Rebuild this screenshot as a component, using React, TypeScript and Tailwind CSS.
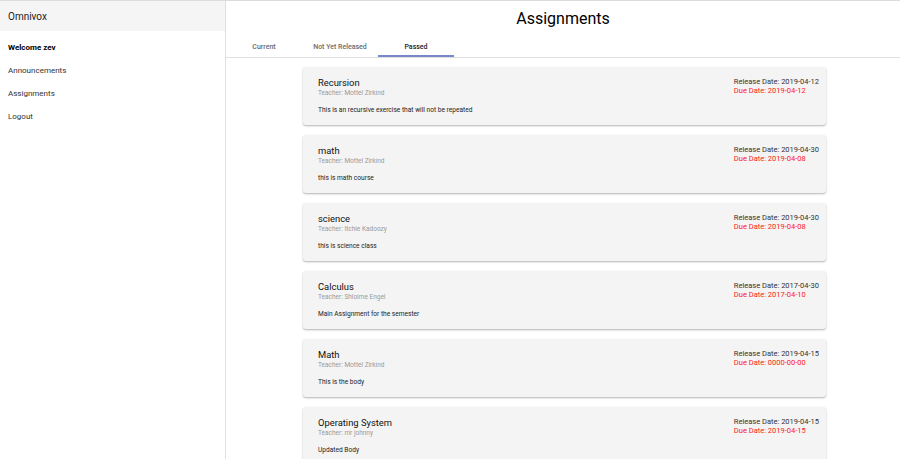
import React from 'react';

// Student assignments view - "Passed" tab

const assignments = [
  { title: 'Recursion', teacher: 'Mottel Zirkind', body: 'This is an recursive exercise that will not be repeated', release: '2019-04-12', due: '2019-04-12' },
  { title: 'math', teacher: 'Mottel Zirkind', body: 'this is math course', release: '2019-04-30', due: '2019-04-08' },
  { title: 'science', teacher: 'Itchie Kadoozy', body: 'this is science class', release: '2019-04-30', due: '2019-04-08' },
  { title: 'Calculus', teacher: 'Shloime Engel', body: 'Main Assignment for the semester', release: '2017-04-30', due: '2017-04-10' },
  { title: 'Math', teacher: 'Mottel Zirkind', body: 'This is the body', release: '2019-04-15', due: '0000-00-00' },
  { title: 'Operating System', teacher: 'mr johnny', body: 'Updated Body', release: '2019-04-15', due: '2019-04-15' },
];

const tabs = ['Current', 'Not Yet Released', 'Passed'];

export default function App() {
  const active = 'Passed';

  return (
    <div
      className="flex h-screen overflow-hidden border-t border-[#dcdcdc] bg-white text-[#212121]"
      style={{ fontFamily: 'Roboto, "Liberation Sans", sans-serif' }}
    >
      {/* Sidebar */}
      <aside className="w-[226px] shrink-0 border-r border-[#e0e0e0]">
        <div className="flex h-[30px] items-center bg-[#f5f5f5] px-[8px] text-[10px] text-[#212121]">
          Omnivox
        </div>
        <nav className="flex flex-col pt-[5px] text-[8px]">
          <div className="flex h-[23px] items-center px-[8px] font-bold text-black">Welcome zev</div>
          <div className="flex h-[23px] items-center px-[8px] text-[#333]">Announcements</div>
          <div className="flex h-[23px] items-center px-[8px] text-[#333]">Assignments</div>
          <div className="flex h-[23px] items-center px-[8px] text-[#333]">Logout</div>
        </nav>
      </aside>

      {/* Main */}
      <main className="flex min-h-0 flex-1 flex-col">
        <h1 className="flex h-[35px] shrink-0 items-center justify-center text-[16px] font-normal text-black">
          Assignments
        </h1>

        <div className="flex h-[22px] shrink-0 border-b border-[#e0e0e0]">
          {tabs.map((tab) => (
            <div
              key={tab}
              className={
                tab === active
                  ? 'flex w-[76px] items-center justify-center border-b-2 border-[#7986cb] pt-[3px] text-[7px] font-medium text-[#222]'
                  : 'flex w-[76px] items-center justify-center border-b-2 border-transparent pt-[3px] text-[7px] font-medium text-[#6b6b6b]'
              }
            >
              {tab}
            </div>
          ))}
        </div>

        <div className="flex flex-col items-center gap-[10px] pl-[3px] pt-[9px]">
          {assignments.map((a, i) => (
            <div
              key={i}
              className="flex h-[58px] w-[523px] shrink-0 justify-between rounded-[3px] bg-[#f4f4f4] pl-[15px] pr-[7px] pt-[9px] shadow-[0_1px_2px_rgba(0,0,0,0.3)]"
            >
              <div className="flex flex-col">
                <div className="text-[9.4px] font-normal leading-[13px] text-[#111]">{a.title}</div>
                <div className="text-[6.5px] leading-[9px] text-[#9a9a9a]">Teacher: {a.teacher}</div>
                <div className="mt-[7px] text-[6.6px] leading-[10px] text-[#222]">{a.body}</div>
              </div>
              <div className="flex flex-col pt-[1px] text-[7.5px] leading-[9px]">
                <div className="text-[#333]">Release Date: {a.release}</div>
                <div className="text-[#ff2020]">Due Date: {a.due}</div>
              </div>
            </div>
          ))}
        </div>
      </main>
    </div>
  );
}
